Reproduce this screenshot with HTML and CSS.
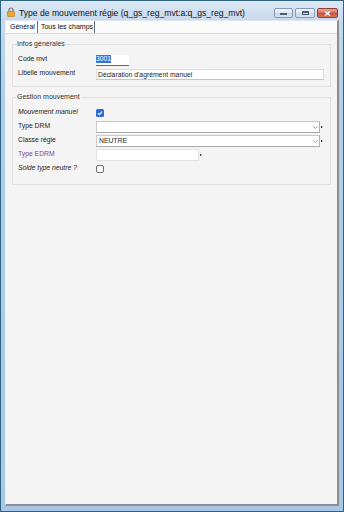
FILE: index.html
```html
<!DOCTYPE html>
<html lang="fr">
<head>
    <meta charset="UTF-8">
    <meta name="viewport" content="width=device-width, initial-scale=1.0">
    <title>Type de mouvement régie</title>
    <link rel="stylesheet" href="styles.css">
</head>
<body>
    <div class="window">
        <div class="titlebar">
            <svg class="lock" viewBox="0 0 8 10" width="8" height="10">
                <path d="M2 4.6V3a2 2 0 0 1 4 0v1.6" fill="none" stroke="#7a6a52" stroke-width="1.2"></path>
                <rect x="0.5" y="4.4" width="7" height="5.1" rx="0.6" fill="#eea531" stroke="#b87412" stroke-width="0.6"></rect>
            </svg>
            <span class="title">Type de mouvement régie (q_gs_reg_mvt:a:q_gs_reg_mvt)</span>
            <div class="caption">
                <span class="cbtn min"><span class="glyph-min"></span></span>
                <span class="cbtn max"><span class="glyph-max"></span></span>
                <span class="cbtn close">
                    <svg viewBox="0 0 7 5" width="7" height="5">
                        <path d="M1 0.5l5 4M6 0.5l-5 4" stroke="#fff" stroke-width="1.4"></path>
                    </svg>
                </span>
            </div>
        </div>

        <div class="client">
            <div class="tabs">
                <span class="tab active">Général</span>
                <span class="tab second">Tous les champs</span>
            </div>

            <div class="panel">
                <fieldset class="group">
                    <legend>Infos générales</legend>
                    <div class="rows">
                        <div class="row">
                            <label>Code mvt</label>
                            <div class="ctrl"><div class="code"><span class="sel">3001</span></div></div>
                        </div>
                        <div class="row">
                            <label>Libelle mouvement</label>
                            <div class="ctrl"><div class="text">Déclaration d'agrément manuel</div></div>
                        </div>
                    </div>
                </fieldset>

                <fieldset class="group">
                    <legend>Gestion mouvement</legend>
                    <div class="rows">
                        <div class="row">
                            <label class="it">Mouvement manuel</label>
                            <div class="ctrl">
                                <span class="check on">
                                    <svg viewBox="0 0 8 8" width="8" height="8">
                                        <path d="M2 4.2l1.4 1.4L6 2.7" fill="none" stroke="#fff" stroke-width="1.1"></path>
                                    </svg>
                                </span>
                            </div>
                        </div>
                        <div class="row">
                            <label>Type DRM</label>
                            <div class="ctrl">
                                <div class="combo">
                                    <span></span>
                                    <svg class="chev" viewBox="0 0 5 3" width="5" height="3">
                                        <path d="M0.4 0.4l2.1 2.1 2.1-2.1" fill="none" stroke="#8c8c8c" stroke-width="0.9"></path>
                                    </svg>
                                </div>
                                <span class="mark"></span>
                            </div>
                        </div>
                        <div class="row">
                            <label>Classe régie</label>
                            <div class="ctrl">
                                <div class="combo">
                                    <span>NEUTRE</span>
                                    <svg class="chev" viewBox="0 0 5 3" width="5" height="3">
                                        <path d="M0.4 0.4l2.1 2.1 2.1-2.1" fill="none" stroke="#8c8c8c" stroke-width="0.9"></path>
                                    </svg>
                                </div>
                                <span class="mark"></span>
                            </div>
                        </div>
                        <div class="row">
                            <label class="purple">Type EDRM</label>
                            <div class="ctrl">
                                <div class="edrm"></div>
                                <span class="mark"></span>
                            </div>
                        </div>
                        <div class="row">
                            <label class="it">Solde type neutre ?</label>
                            <div class="ctrl"><span class="check"></span></div>
                        </div>
                    </div>
                </fieldset>
            </div>
        </div>
    </div>
</body>
</html>
```

FILE: styles.css
```css
body {
    margin: 0;
    font-family: "Liberation Sans", Arial, sans-serif;
    font-size: 6.8px;
    color: #222;
}

.window {
    width: 344px;
    height: 512px;
    box-sizing: border-box;
    border: 1px solid #2f6382;
    background: linear-gradient(#dde8f4, #c6d9ee 19px, #b4cee9 80px, #a7c6e5);
    display: flex;
    flex-direction: column;
}

/* title bar */
.titlebar {
    height: 19px;
    box-sizing: border-box;
    padding: 6px 5px 0 6px;
    display: flex;
    align-items: flex-start;
}
.lock {
    flex: none;
    display: block;
}
.title {
    margin-left: 4px;
    margin-top: 1px;
    font-size: 8.6px;
    line-height: 10px;
    white-space: nowrap;
    color: #111;
}
.caption {
    margin-left: auto;
    margin-top: 1px;
    display: flex;
    gap: 2px;
}
.cbtn {
    height: 10px;
    box-sizing: border-box;
    border: 1px solid #8199b5;
    border-radius: 2px;
    display: flex;
    align-items: center;
    justify-content: center;
    background: linear-gradient(#f3f7fb, #dbe5f0 50%, #c9d7e7 51%, #d8e3ef);
}
.min { width: 19px; }
.max { width: 20px; }
.close {
    width: 21px;
    border-color: #8a4034;
    background: linear-gradient(#eaa99c, #d66a57 50%, #c94c37 51%, #d77863);
}
.glyph-min {
    width: 7px;
    height: 2px;
    margin-top: 2px;
    background: #4a5d78;
}
.glyph-max {
    width: 7px;
    height: 4px;
    box-sizing: border-box;
    border: 1px solid #4a5d78;
    border-top-width: 2px;
}
.close svg { display: block; }

/* client area */
.client {
    flex: 1;
    margin: 0 4px 5px;
    display: flex;
    flex-direction: column;
    background: #fbfbfb;
    border-left: 1px solid #edf3f9;
    border-top: 1px solid #dfe6ee;
    border-right: 2px solid #8d8d8d;
    border-bottom: 2px solid #8d8d8d;
}

.tabs {
    display: flex;
    height: 12px;
    padding-left: 2px;
    font-size: 7px;
}
.tab {
    padding: 0 2px;
    line-height: 12px;
    border-right: 1px solid #6f6f6f;
    color: #111;
}
.tab.active { background: #fff; }
.tab.second { padding: 0 1px 0 3px; }

.panel {
    flex: 1;
    background: #f4f4f4;
    border-top: 1px solid #dadada;
    padding: 0 6px;
}

/* group boxes */
.group {
    margin: 6px 0 0;
    padding: 6px 5px 6px;
    border: 1px solid #dfdfdf;
    min-width: 0;
}
.group + .group { padding-bottom: 9px; }
.group legend {
    padding: 0 1px;
    margin-left: -2px;
    line-height: 8px;
    font-size: 7px;
    color: #333;
}

.rows {
    display: flex;
    flex-direction: column;
    gap: 2px;
}
.row {
    display: grid;
    grid-template-columns: 78px 1fr;
    height: 12px;
}
.row label {
    align-self: start;
    line-height: 10px;
    white-space: nowrap;
}
.row label.it { font-style: italic; }
.row label.purple { color: #8b3fa0; }

.ctrl {
    display: flex;
    align-items: center;
    gap: 1px;
}

.code {
    width: 33px;
    height: 11px;
    box-sizing: border-box;
    background: #fff;
    border-bottom: 1.5px solid #2c6fd2;
    display: flex;
    align-items: flex-start;
}
.sel {
    margin-top: 0.5px;
    height: 8px;
    line-height: 8px;
    background: #3576d6;
    color: #fff;
}

.text {
    width: 228px;
    height: 11px;
    box-sizing: border-box;
    background: #fff;
    border: 1px solid #dcdcdc;
    border-bottom-color: #c4c4c4;
    padding-left: 1px;
    line-height: 9px;
    white-space: nowrap;
}

.combo {
    width: 224px;
    height: 12px;
    box-sizing: border-box;
    background: #fff;
    border: 1px solid #c4c4c4;
    border-color: #c8c8c8 #b2b2b2 #ababab #c8c8c8;
    padding: 0 1.5px 0 2px;
    display: flex;
    align-items: center;
    line-height: 10px;
}
.chev {
    margin-left: auto;
    display: block;
}

.edrm {
    width: 103px;
    height: 12px;
    box-sizing: border-box;
    background: #fff;
    border: 1px solid #e3e3e3;
}

.mark {
    width: 0;
    height: 0;
    border-left: 2px solid #111;
    border-top: 1.5px solid transparent;
    border-bottom: 1.5px solid transparent;
}

.check {
    width: 8px;
    height: 8px;
    box-sizing: border-box;
    border: 1px solid #707070;
    border-radius: 2px;
    background: #f8f8f8;
}
.check.on {
    border: none;
    border-radius: 1.5px;
    background: #2d6ccf;
}
.check svg { display: block; }
```
